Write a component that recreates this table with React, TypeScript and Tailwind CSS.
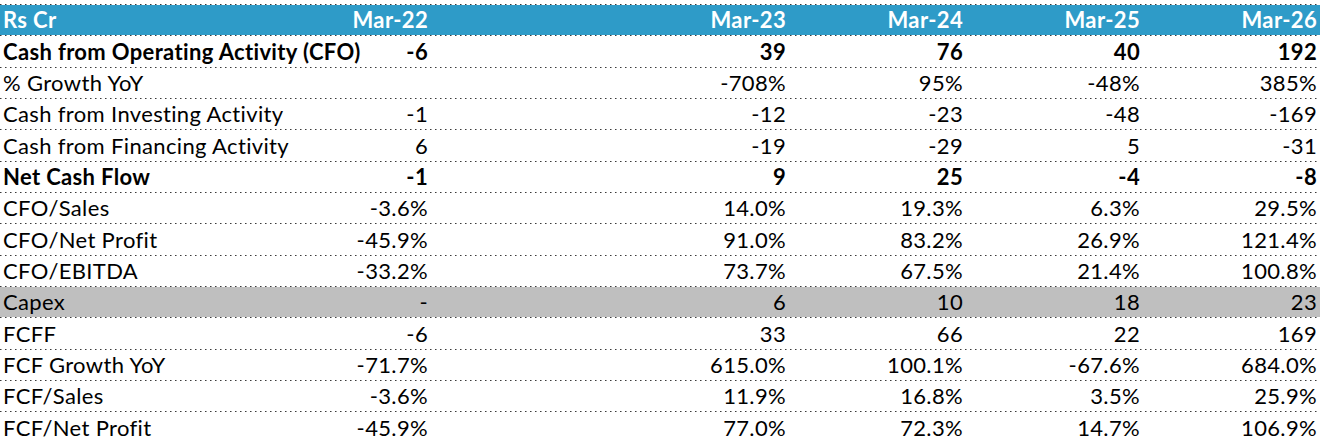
const header = ["Rs Cr", "Mar-22", "Mar-23", "Mar-24", "Mar-25", "Mar-26"];

type Row = { label: string; values: string[]; bold?: boolean; shade?: boolean };

const rows: Row[] = [
  { label: "Cash from Operating Activity (CFO)", values: ["-6", "39", "76", "40", "192"], bold: true },
  { label: "% Growth YoY", values: ["", "-708%", "95%", "-48%", "385%"] },
  { label: "Cash from Investing Activity", values: ["-1", "-12", "-23", "-48", "-169"] },
  { label: "Cash from Financing Activity", values: ["6", "-19", "-29", "5", "-31"] },
  { label: "Net Cash Flow", values: ["-1", "9", "25", "-4", "-8"], bold: true },
  { label: "CFO/Sales", values: ["-3.6%", "14.0%", "19.3%", "6.3%", "29.5%"] },
  { label: "CFO/Net Profit", values: ["-45.9%", "91.0%", "83.2%", "26.9%", "121.4%"] },
  { label: "CFO/EBITDA", values: ["-33.2%", "73.7%", "67.5%", "21.4%", "100.8%"] },
  { label: "Capex", values: ["-", "6", "10", "18", "23"], shade: true },
  { label: "FCFF", values: ["-6", "33", "66", "22", "169"] },
  { label: "FCF Growth YoY", values: ["-71.7%", "615.0%", "100.1%", "-67.6%", "684.0%"] },
  { label: "FCF/Sales", values: ["-3.6%", "11.9%", "16.8%", "3.5%", "25.9%"] },
  { label: "FCF/Net Profit", values: ["-45.9%", "77.0%", "72.3%", "14.7%", "106.9%"] },
];

const cols = "grid grid-cols-[254px_177px_358px_177px_177px_177px]";

const Dots = () => (
  <div className="h-px w-full bg-[repeating-linear-gradient(90deg,#3a3a3a_0_1px,#9a9a9a_1px_2px,transparent_2px_5px)]" />
);

const App = () => {
  return (
    <div className="w-[1323px] h-[447px] bg-white overflow-hidden pt-[4px] font-['Lato','Liberation_Sans',sans-serif] text-[22px] tracking-[0.35px] text-black">
      <div className="w-[1320px]">
        <Dots />
        <div className={`${cols} h-[30px] bg-[#2e9bc8] text-white font-bold items-end leading-none`}>
          {header.map((h, i) => (
            <div key={h} className={i === 0 ? "pl-[3px] pb-[4px]" : "text-right pr-[3px] pb-[4px]"}>
              {h}
            </div>
          ))}
        </div>
        {rows.map((row, r) => (
          <div key={row.label}>
            <Dots />
            <div
              className={`${cols} ${r % 3 === 0 ? "h-[31px]" : "h-[30px]"} ${row.shade ? "bg-[#bfbfbf]" : ""} ${
                row.bold ? "font-bold" : ""
              } items-end leading-none`}
            >
              <div className="pl-[3px] pb-[4px] whitespace-nowrap">{row.label}</div>
              {row.values.map((v, i) => (
                <div key={i} className="text-right pr-[3px] pb-[4px]">
                  {v}
                </div>
              ))}
            </div>
          </div>
        ))}
      </div>
    </div>
  );
};

export default App;
